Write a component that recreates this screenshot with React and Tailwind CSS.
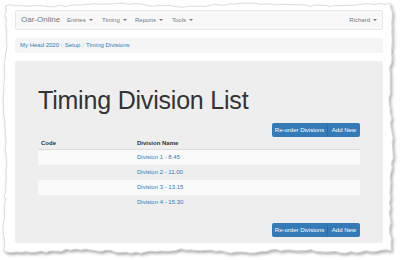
const rnd = (i) => {
  const x = Math.sin(i * 12.9898) * 43758.5453;
  return x - Math.floor(x);
};

// torn paper outline around the screenshot
const tornPath = () => {
  const pts = [];
  let k = 1;
  for (let x = 5; x <= 391; x += 5) pts.push([x, 5 + Math.sin(x / 23) * 1.2 + (rnd(k++) - 0.5) * 2]);
  for (let y = 8; y <= 250; y += 5) pts.push([391 + Math.sin(y / 19) * 1.5 + (rnd(k++) - 0.5) * 2, y]);
  for (let x = 391; x >= 5; x -= 5) pts.push([x, 251 + Math.sin(x / 17) * 1.3 + (rnd(k++) - 0.5) * 2.2]);
  for (let y = 250; y >= 8; y -= 5) pts.push([5 + Math.sin(y / 21) * 1.4 + (rnd(k++) - 0.5) * 2, y]);
  return "M" + pts.map((p) => p[0].toFixed(1) + " " + p[1].toFixed(1)).join(" L") + " Z";
};

const Caret = () => (
  <span className="ml-[3px] inline-block w-0 h-0 border-l-[2px] border-r-[2px] border-t-[2px] border-l-transparent border-r-transparent border-t-[#777] align-middle" />
);

const ButtonPair = () => (
  <div className="flex justify-end">
    <div className="flex h-[14px] text-[6px] text-white rounded-[2px] overflow-hidden">
      <span className="w-[56px] flex items-center justify-center bg-[#337ab7] border-r border-[#2e6da4]">Re-order Divisions</span>
      <span className="w-[32px] flex items-center justify-center bg-[#337ab7]">Add New</span>
    </div>
  </div>
);

const rows = ["Division 1 - 8.45", "Division 2 - 11.00", "Division 3 - 13.15", "Division 4 - 15.30"];

export default function App() {
  return (
    <div className="relative w-[400px] h-[260px] bg-white overflow-hidden" style={{ fontFamily: '"Liberation Sans", Arial, sans-serif' }}>
      <svg className="absolute inset-0" width="400" height="260">
        <defs>
          <filter id="sh" x="-5%" y="-5%" width="110%" height="115%">
            <feDropShadow dx="1.5" dy="2" stdDeviation="1.8" floodColor="#000" floodOpacity="0.35" />
          </filter>
        </defs>
        <path d={tornPath()} fill="#fff" stroke="#c8c8c8" strokeWidth="0.6" filter="url(#sh)" />
      </svg>

      <div className="relative pt-[10px] pl-[15px] pr-[17px]">
        {/* navbar */}
        <div className="h-[20px] bg-[#f8f8f8] border border-[#e7e7e7] rounded-[2px] flex items-center text-[#777]">
          <span className="ml-[5px] text-[8px] w-[46px]">Oar-Online</span>
          <div className="flex text-[6px]">
            <span className="w-[35px]">Entries<Caret /></span>
            <span className="w-[33px]">Timing<Caret /></span>
            <span className="w-[37px]">Reports<Caret /></span>
            <span>Tools<Caret /></span>
          </div>
          <span className="ml-auto mr-[5px] text-[6px]">Richard<Caret /></span>
        </div>

        {/* breadcrumb */}
        <div className="mt-[8px] h-[15px] bg-[#f5f5f5] rounded-[2px] px-[5px] flex items-center text-[6px] text-[#337ab7]">
          <span>My Head 2020</span>
          <span className="text-[#ccc] px-[2px]">/</span>
          <span>Setup</span>
          <span className="text-[#ccc] px-[2px]">/</span>
          <span>Timing Divisions</span>
        </div>

        {/* jumbotron */}
        <div className="mt-[8px] h-[182px] bg-[#eeeeee] rounded-[3px] px-[23px] pt-[27px] flex flex-col">
          <h1 className="text-[25px] leading-none text-[#333] font-light tracking-[-0.2px]">Timing Division List</h1>
          <div className="mt-[10px]">
            <ButtonPair />
          </div>
          <div className="text-[6px]">
            <div className="flex h-[13px] items-center font-bold text-[#333] border-b border-[#ddd]">
              <span className="w-[99px] pl-[3px]">Code</span>
              <span>Division Name</span>
            </div>
            {rows.map((r, i) => (
              <div key={r} className={"flex h-[15px] items-center " + (i % 2 === 0 ? "bg-[#f9f9f9]" : "")}>
                <span className="w-[99px]" />
                <span className="text-[#337ab7]">{r}</span>
              </div>
            ))}
          </div>
          <div className="mt-auto mb-[6px]">
            <ButtonPair />
          </div>
        </div>
      </div>
    </div>
  );
}
